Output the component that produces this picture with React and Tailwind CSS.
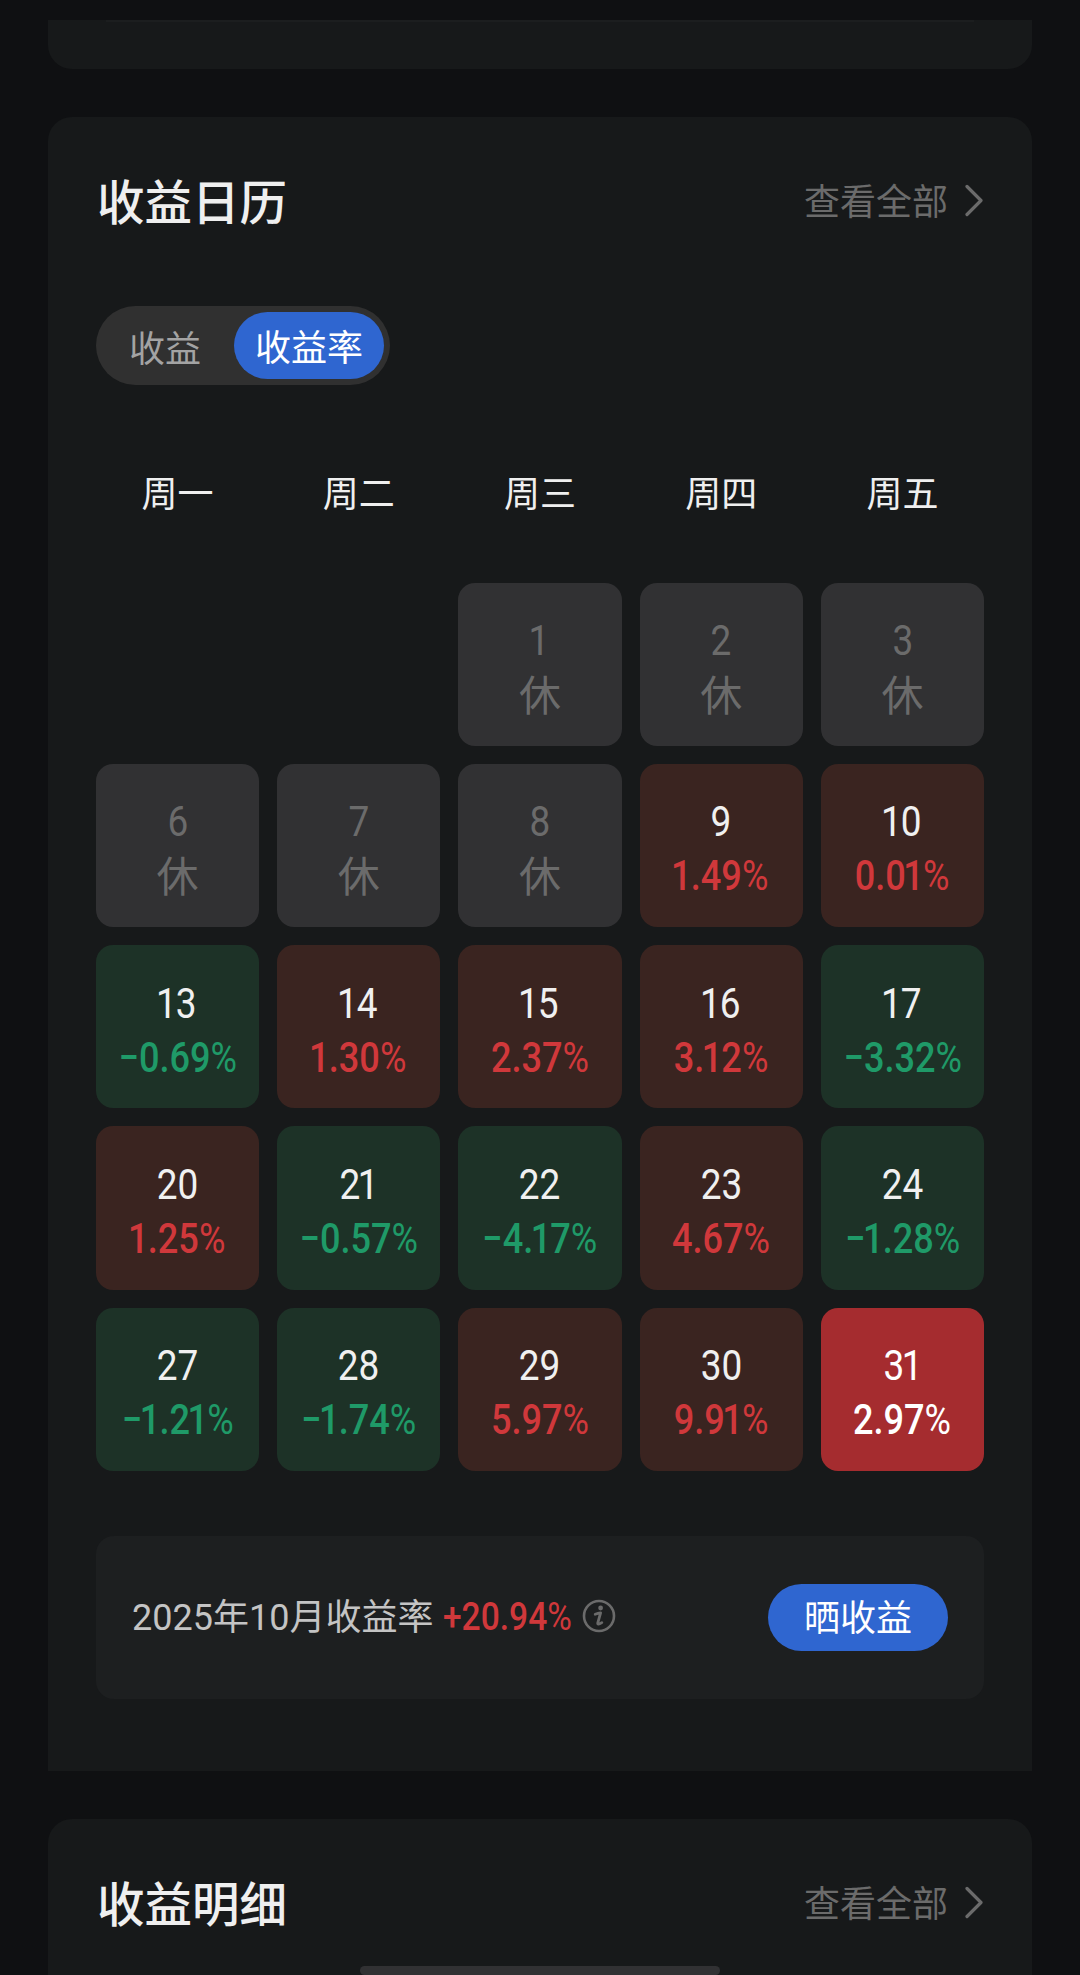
import clsx from 'clsx';

const weekdays = ['周一', '周二', '周三', '周四', '周五'];

const days = [
    null,
    null,
    { day: '1' },
    { day: '2' },
    { day: '3' },
    { day: '6' },
    { day: '7' },
    { day: '8' },
    { day: '9', rate: '1.49%' },
    { day: '10', rate: '0.01%' },
    { day: '13', rate: '−0.69%' },
    { day: '14', rate: '1.30%' },
    { day: '15', rate: '2.37%' },
    { day: '16', rate: '3.12%' },
    { day: '17', rate: '−3.32%' },
    { day: '20', rate: '1.25%' },
    { day: '21', rate: '−0.57%' },
    { day: '22', rate: '−4.17%' },
    { day: '23', rate: '4.67%' },
    { day: '24', rate: '−1.28%' },
    { day: '27', rate: '−1.21%' },
    { day: '28', rate: '−1.74%' },
    { day: '29', rate: '5.97%' },
    { day: '30', rate: '9.91%' },
    { day: '31', rate: '2.97%', today: true },
];

// Condensed digits, with a tighter "1" and a lighter percent sign
function Num({ text, className }) {
    return (
        <span className={clsx('inline-block whitespace-nowrap', className)}>
            {text.split('').map((ch, i) => (
                <span
                    key={i}
                    className={clsx(
                        'inline-block',
                        ch === '1' && '-ml-[3px] -mr-[1px]',
                        ch === '%' && 'font-normal'
                    )}
                >
                    {ch}
                </span>
            ))}
        </span>
    );
}

function DayCell({ item }) {
    if (!item) return <div />;
    const { day, rate, today } = item;
    const down = rate && rate.startsWith('−');

    return (
        <div
            className={clsx(
                'flex flex-col items-center rounded-[17px] pt-[31.5px]',
                !rate && 'bg-[#313133] text-[#6b6b6b]',
                today && 'bg-[#a52c2f] text-white',
                rate && !today && (down ? 'bg-[#1d3227] text-[#f0f0f0]' : 'bg-[#3a2420] text-[#f0f0f0]')
            )}
        >
            <Num text={day} className="h-[54px] text-[42px] leading-[54px] scale-x-[0.88]" />
            {rate ? (
                <Num
                    text={rate}
                    className={clsx(
                        'h-[54px] text-[42px] leading-[54px] font-medium scale-x-[0.86]',
                        !today && (down ? 'text-[#1f9a68]' : 'text-[#d0383b]')
                    )}
                />
            ) : (
                <span className="pt-[2px] text-[42px] leading-[54px]">休</span>
            )}
        </div>
    );
}

function CardHeader({ title }) {
    return (
        <div className="flex h-[56px] items-center justify-between">
            <h2 className="pt-[5px] pl-px text-[47.5px] leading-[56px] font-medium text-[#efefef]">{title}</h2>
            <div className="flex items-center text-[#6b6b6b]">
                <span className="pt-[4px] text-[36px] leading-[56px]">查看全部</span>
                <svg className="mr-[1px] ml-[17px] h-[34px] w-[18px]" viewBox="0 0 18 34" fill="none" stroke="currentColor" strokeWidth="3.2" strokeLinecap="round" strokeLinejoin="round">
                    <path d="M2 2.5 L16 16.5 L2 30.5" />
                </svg>
            </div>
        </div>
    );
}

function App() {
    return (
        <div className="flex h-[1975px] flex-col overflow-hidden bg-[#0f1012] px-12 pt-[20px] font-['Roboto','Noto_Sans_CJK_SC',sans-serif]">
            {/* Bottom edge of the previous card */}
            <div className="h-[49px] shrink-0 rounded-b-[24px] bg-[#17191a] px-[58px]">
                <div className="h-[2px] bg-[#1c1e1f]" />
            </div>

            {/* Calendar */}
            <section className="mt-[48px] h-[1654px] shrink-0 rounded-t-[24px] bg-[#17191a] px-12 pt-[56px]">
                <CardHeader title="收益日历" />

                <div className="mt-[77px] flex h-[79px] w-[294px] items-center rounded-full bg-[#303030] pr-[6px] text-[36px]">
                    <button className="flex-1 pt-[8px] text-center text-[#a3a3a3]">收益</button>
                    <button className="h-[67px] w-[150px] rounded-full bg-[#2f66d0] pt-[8px] text-center leading-[59px] text-white">收益率</button>
                </div>

                <div className="mt-[83px] grid h-[54px] grid-cols-5 gap-x-[18px] text-center text-[36px] leading-[54px] text-[#efefef]">
                    {weekdays.map((w) => (
                        <div key={w}>{w}</div>
                    ))}
                </div>

                <div className="mt-[60.5px] grid auto-rows-[163.25px] grid-cols-5 gap-[18px]">
                    {days.map((item, i) => (
                        <DayCell key={i} item={item} />
                    ))}
                </div>

                {/* Month summary */}
                <div className="mt-[65.5px] flex h-[163px] items-center justify-between rounded-[18px] bg-[#1d1f20] px-9">
                    <div className="flex items-center text-[36px] text-[#c4c4c4]">
                        <span>2025年10月收益率</span>
                        <Num text="+20.94%" className="-mt-px ml-[10px] origin-left scale-x-[0.86] text-[39px] font-medium text-[#d0383b]" />
                        <svg className="-mt-[3px] -ml-[11px] h-[34px] w-[34px] text-[#6b6b6b]" viewBox="0 0 34 34" fill="none" stroke="currentColor">
                            <circle cx="17" cy="17" r="15" strokeWidth="2.6" />
                            <circle cx="18.6" cy="9" r="2.4" fill="currentColor" stroke="none" />
                            <path d="M13.2 15.2 Q16 14.2 18.6 13.8 L15.8 23.8 Q15.2 26.6 19.8 23.6" strokeWidth="2.8" strokeLinecap="round" strokeLinejoin="round" />
                        </svg>
                    </div>
                    <button className="h-[67px] w-[180px] rounded-full bg-[#2f66d0] pt-[2px] text-[36px] text-white">晒收益</button>
                </div>
            </section>

            {/* Details */}
            <section className="relative mt-[48px] h-[156px] shrink-0 rounded-t-[24px] bg-[#17191a] px-12 pt-[56px]">
                <CardHeader title="收益明细" />
                <div className="absolute bottom-0 left-[312px] h-[9px] w-[360px] rounded-full bg-[#313133]" />
            </section>
        </div>
    );
}

export default App;
